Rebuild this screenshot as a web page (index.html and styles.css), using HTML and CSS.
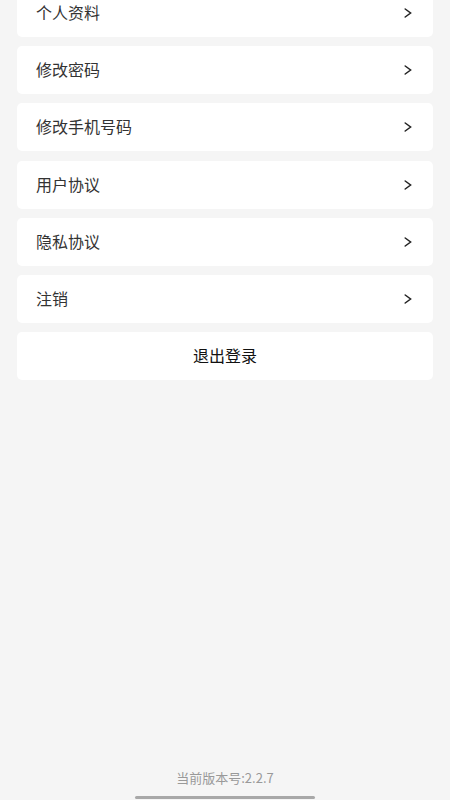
FILE: index.html
```html
<!DOCTYPE html>
<html lang="zh-CN">
<head>
<meta charset="utf-8">
<title>设置</title>
<link rel="stylesheet" href="styles.css">
</head>
<body>
<div class="page">
  <ul class="menu">
    <li class="item"><span class="label">个人资料</span><svg class="chev" viewBox="0 0 8 10" width="8" height="10"><polyline points="1.2,1 6.6,5 1.2,9"/></svg></li>
    <li class="item"><span class="label">修改密码</span><svg class="chev" viewBox="0 0 8 10" width="8" height="10"><polyline points="1.2,1 6.6,5 1.2,9"/></svg></li>
    <li class="item"><span class="label">修改手机号码</span><svg class="chev" viewBox="0 0 8 10" width="8" height="10"><polyline points="1.2,1 6.6,5 1.2,9"/></svg></li>
    <li class="item"><span class="label">用户协议</span><svg class="chev" viewBox="0 0 8 10" width="8" height="10"><polyline points="1.2,1 6.6,5 1.2,9"/></svg></li>
    <li class="item"><span class="label">隐私协议</span><svg class="chev" viewBox="0 0 8 10" width="8" height="10"><polyline points="1.2,1 6.6,5 1.2,9"/></svg></li>
    <li class="item"><span class="label">注销</span><svg class="chev" viewBox="0 0 8 10" width="8" height="10"><polyline points="1.2,1 6.6,5 1.2,9"/></svg></li>
    <li class="item logout"><span class="label">退出登录</span></li>
  </ul>
  <footer class="footer">
    <div class="version">当前版本号:2.2.7</div>
    <div class="home-bar"></div>
  </footer>
</div>
</body>
</html>
```
FILE: styles.css
```css
html, body {
  margin: 0;
  padding: 0;
  background: #f5f5f5;
}
body {
  font-family: "Noto Sans CJK SC", "Noto Sans", sans-serif;
  color: #333;
}
.page {
  height: 800px;
  display: flex;
  flex-direction: column;
  overflow: hidden;
}
.menu {
  list-style: none;
  margin: -11.25px 17px 0;
  padding: 0;
  display: flex;
  flex-direction: column;
  gap: 9.25px;
}
.item {
  height: 48px;
  background: #fff;
  border-radius: 5px;
  display: flex;
  align-items: center;
  justify-content: space-between;
  padding: 0 21px 0 19px;
  font-size: 16px;
  line-height: 22px;
  color: #333;
}
.label {
  margin-bottom: 2px;
}
.chev {
  fill: none;
  stroke: #222;
  stroke-width: 1.5;
  stroke-linecap: round;
  stroke-linejoin: miter;
}
.logout {
  justify-content: center;
  padding: 0;
  color: #111;
}
.footer {
  margin-top: auto;
  display: flex;
  flex-direction: column;
  align-items: center;
  gap: 9px;
  padding-bottom: 1px;
}
.version {
  font-size: 13px;
  line-height: 18px;
  color: #999;
}
.home-bar {
  width: 180px;
  height: 3px;
  border-radius: 2px;
  background: #a8a8a8;
}
```
